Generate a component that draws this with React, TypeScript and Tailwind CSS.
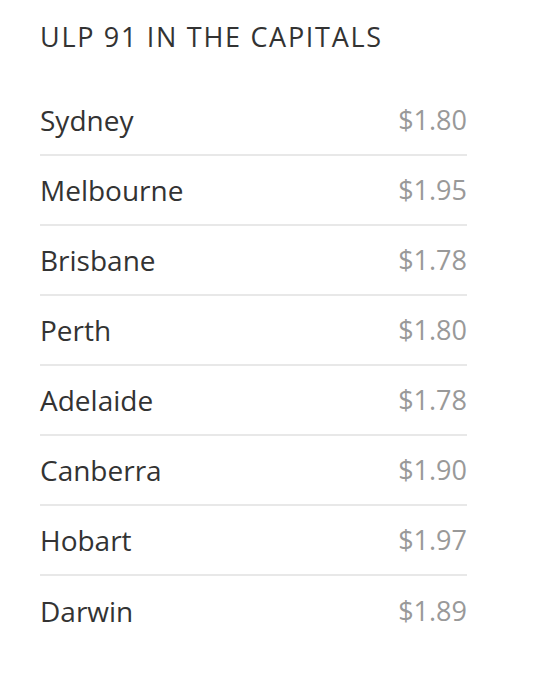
import React from 'react'

const prices = [
  { city: 'Sydney', price: '$1.80' },
  { city: 'Melbourne', price: '$1.95' },
  { city: 'Brisbane', price: '$1.78' },
  { city: 'Perth', price: '$1.80' },
  { city: 'Adelaide', price: '$1.78' },
  { city: 'Canberra', price: '$1.90' },
  { city: 'Hobart', price: '$1.97' },
  { city: 'Darwin', price: '$1.89' },
]

function App(): JSX.Element {
  return (
    <div className="min-h-[682px] w-full bg-white font-['Open_Sans',sans-serif]">
      <div className="w-[427px] ml-[40px] pt-[21px]">
        <h2 className="text-[27px] leading-[32px] text-[#333] tracking-[1.7px]">ULP 91 IN THE CAPITALS</h2>
        <ul className="mt-[33px]">
          {prices.map((p, i) => (
            <li
              key={p.city}
              className={`flex items-center justify-between h-[70px] ${i < prices.length - 1 ? 'border-b-2 border-[#e8e8e8]' : ''}`}
            >
              <span className="text-[28px] text-[#333]">{p.city}</span>
              <span className="text-[27px] text-[#999]">{p.price}</span>
            </li>
          ))}
        </ul>
      </div>
    </div>
  )
}

export default App
